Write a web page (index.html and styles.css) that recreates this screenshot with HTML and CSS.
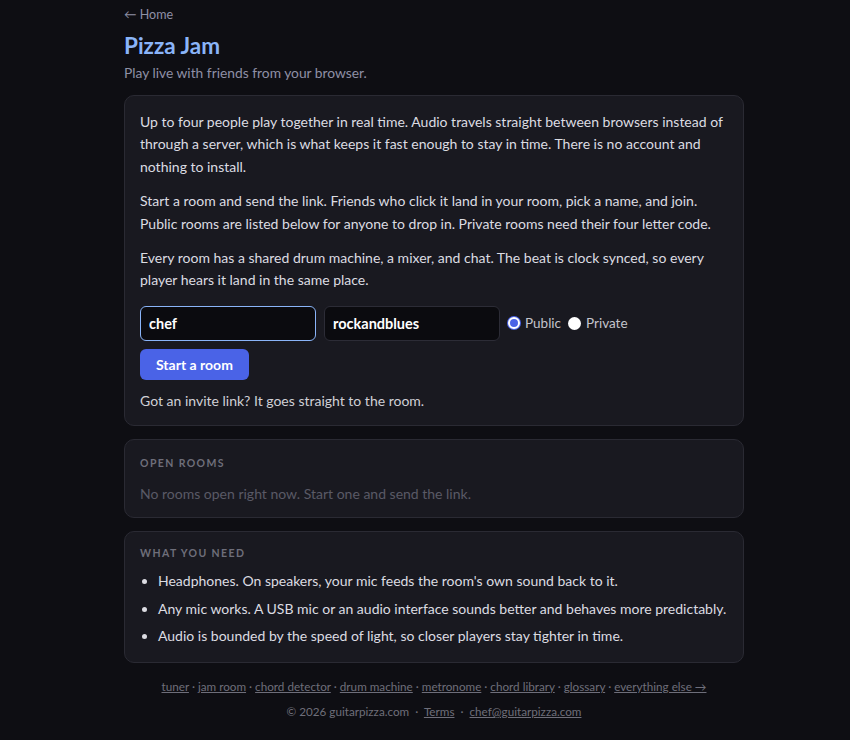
FILE: index.html
```html
<!DOCTYPE html>
<html lang="en">
<head>
<meta charset="utf-8">
<title>Pizza Jam</title>
<link rel="stylesheet" href="styles.css">
</head>
<body>
<main class="wrap">
  <a class="back" href="#">← Home</a>
  <h1 class="title">Pizza Jam</h1>
  <p class="sub">Play live with friends from your browser.</p>

  <section class="card intro">
    <p>Up to four people play together in real time. Audio travels straight between browsers instead of through a server, which is what keeps it fast enough to stay in time. There is no account and nothing to install.</p>
    <p>Start a room and send the link. Friends who click it land in your room, pick a name, and join. Public rooms are listed below for anyone to drop in. Private rooms need their four letter code.</p>
    <p>Every room has a shared drum machine, a mixer, and chat. The beat is clock synced, so every player hears it land in the same place.</p>
    <div class="form-row">
      <input class="field focused" type="text" value="chef">
      <input class="field" type="text" value="rockandblues">
      <label class="radio"><span class="dot on"></span>Public</label>
      <label class="radio"><span class="dot"></span>Private</label>
    </div>
    <button class="btn">Start a room</button>
    <p class="invite">Got an invite link? It goes straight to the room.</p>
  </section>

  <section class="card rooms">
    <h2 class="label">Open rooms</h2>
    <p class="empty">No rooms open right now. Start one and send the link.</p>
  </section>

  <section class="card need">
    <h2 class="label">What you need</h2>
    <ul class="list">
      <li>Headphones. On speakers, your mic feeds the room's own sound back to it.</li>
      <li>Any mic works. A USB mic or an audio interface sounds better and behaves more predictably.</li>
      <li>Audio is bounded by the speed of light, so closer players stay tighter in time.</li>
    </ul>
  </section>

  <footer class="foot">
    <p class="links"><a href="#">tuner</a> · <a href="#">jam room</a> · <a href="#">chord detector</a> · <a href="#">drum machine</a> · <a href="#">metronome</a> · <a href="#">chord library</a> · <a href="#">glossary</a> · <a href="#">everything else →</a></p>
    <p class="copy">© 2026 guitarpizza.com <span class="sep">·</span> <a href="#">Terms</a> <span class="sep">·</span> <a href="#">chef@guitarpizza.com</a></p>
  </footer>
</main>
</body>
</html>
```
FILE: styles.css
```css
* { box-sizing: border-box; }
html, body { margin: 0; padding: 0; }
body {
  background: #0e0e13;
  color: #d8d8de;
  font-family: "Lato", "Noto Sans", sans-serif;
  font-size: 14px;
  padding-left: 18px;
}
.wrap {
  width: 620px;
  margin: 0 auto;
  padding-top: 6px;
}
.back {
  display: block;
  color: #8e90a6;
  font-size: 12.5px;
  text-decoration: none;
  line-height: 18px;
}
.title {
  margin: 8px 0 0;
  font-size: 22.5px;
  line-height: 28px;
  color: #8ab4f8;
  font-weight: 700;
}
.sub {
  margin: 4px 0 13px;
  color: #8e90a6;
  font-size: 13.8px;
  line-height: 18px;
}
.card {
  background: #191920;
  border: 1px solid #2a2a33;
  border-radius: 10px;
  padding: 15px 15px 13px;
  margin-bottom: 13px;
}
.intro p {
  margin: 0 0 12px;
  line-height: 22.4px;
  color: #dcdce2;
}
.form-row {
  display: flex;
  align-items: center;
  gap: 8px;
  margin-top: 14px;
}
.field {
  width: 176px;
  height: 35px;
  background: #0b0b0f;
  border: 1px solid #2c2c36;
  border-radius: 6px;
  color: #ffffff;
  font: 700 14.5px "Lato", sans-serif;
  padding: 0 8px;
  outline: none;
}
.field.focused { border-color: #8ab4f8; }
.radio {
  display: flex;
  align-items: center;
  gap: 5px;
  color: #c4c4cc;
  font-size: 13.5px;
}
.radio + .radio { margin-left: -1px; }
.dot {
  width: 13px;
  height: 13px;
  border-radius: 50%;
  background: #ffffff;
  display: inline-block;
}
.dot.on {
  background: #4a63e7;
  border: 2px solid #ffffff;
  box-shadow: 0 0 0 1px #4a63e7;
  width: 12px;
  height: 12px;
  margin-left: 0;
}
.btn {
  display: block;
  margin-top: 8px;
  height: 31px;
  padding: 0 16px;
  background: #4a63e7;
  color: #ffffff;
  border: none;
  border-radius: 6px;
  font: 700 14px "Lato", sans-serif;
}
.intro .invite {
  margin: 10px 0 0;
  color: #d0d0d6;
}
.label {
  margin: 0;
  font-size: 10.5px;
  font-weight: 700;
  letter-spacing: 1.4px;
  text-transform: uppercase;
  color: #6e6e7a;
  line-height: 16px;
}
.rooms { padding-top: 15px; padding-bottom: 13px; }
.empty {
  margin: 13px 0 0;
  color: #5a5a66;
  line-height: 20px;
}
.need { padding-top: 13px; padding-bottom: 12px; margin-bottom: 11px; }
.list {
  margin: 6px 0 0;
  padding-left: 18px;
  list-style: disc;
}
.list li {
  line-height: 27.5px;
  color: #dcdce2;
}
.list li::marker { color: #dcdce2; }
.foot { text-align: center; }
.foot p { margin: 0; font-size: 11.7px; color: #6e6e7a; line-height: 25px; }
.foot a { color: #6e6e7a; text-decoration: underline; }
.sep { margin: 0 3px; }
```
